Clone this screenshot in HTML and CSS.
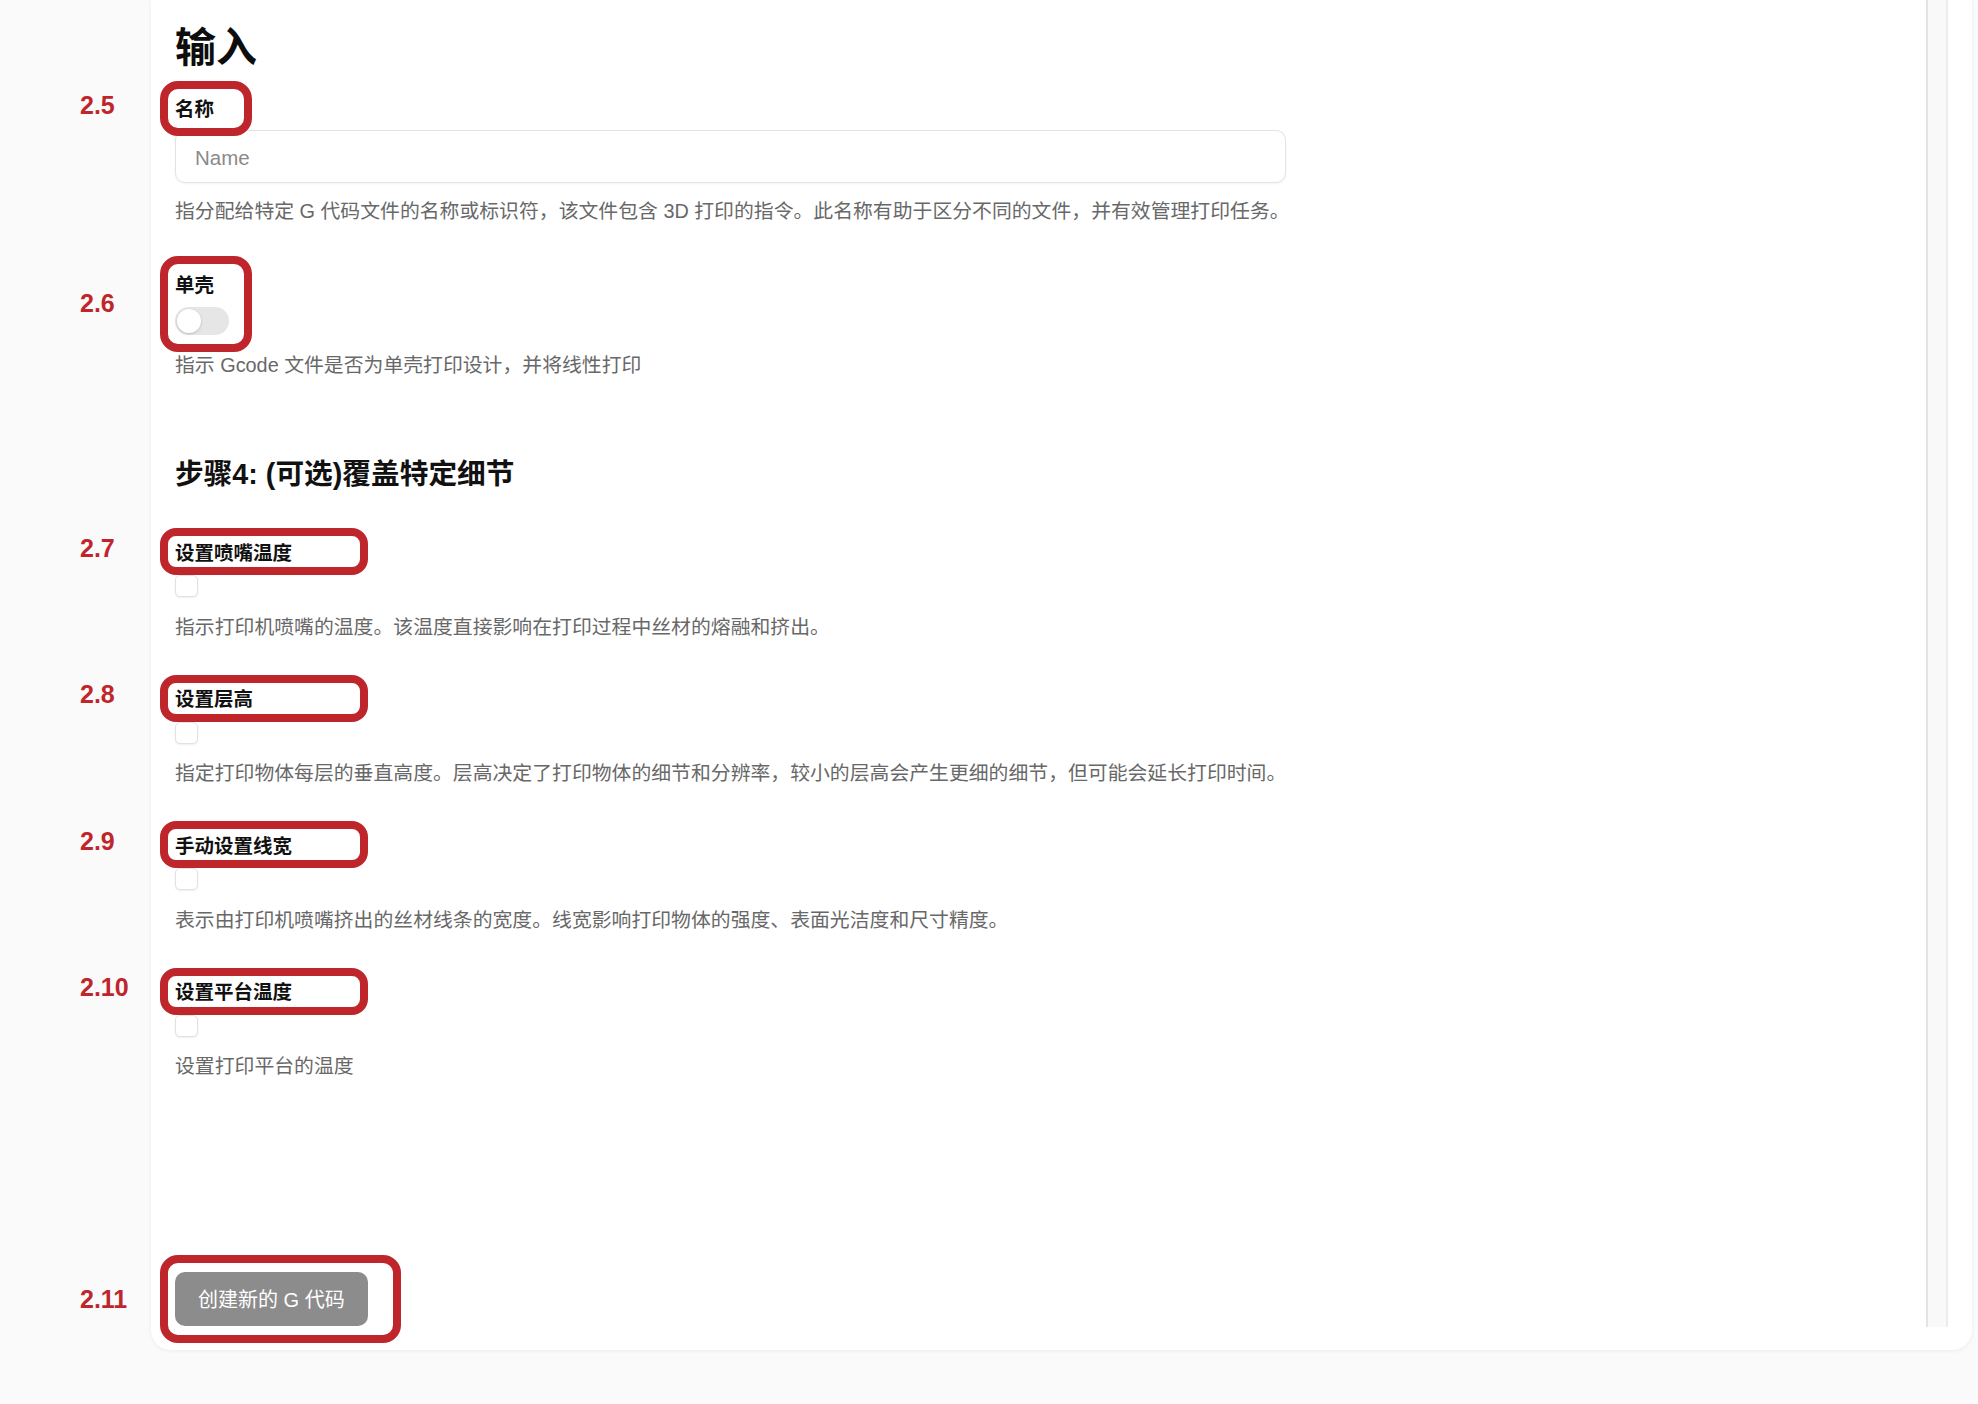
FILE: index.html
```html
<!DOCTYPE html>
<html lang="zh-CN">
<head>
<meta charset="utf-8">
<title>输入</title>
<link rel="stylesheet" href="styles.css">
</head>
<body>
<div class="card">
  <main class="content">
    <h1 class="title">输入</h1>

    <div class="field field-name">
      <span class="num">2.5</span>
      <span class="mark mark-name"></span>
      <label class="label">名称</label>
      <input class="text-input" type="text" placeholder="Name">
      <p class="desc desc-input">指分配给特定 G 代码文件的名称或标识符，该文件包含 3D 打印的指令。此名称有助于区分不同的文件，并有效管理打印任务。</p>
    </div>

    <div class="field field-shell">
      <span class="num num-shell">2.6</span>
      <span class="mark mark-shell"></span>
      <label class="label">单壳</label>
      <span class="toggle"><span class="knob"></span></span>
      <p class="desc desc-toggle">指示 Gcode 文件是否为单壳打印设计，并将线性打印</p>
    </div>

    <h2 class="step">步骤4: (可选)覆盖特定细节</h2>

    <div class="field field-check first">
      <span class="num num-check">2.7</span>
      <span class="mark mark-wide"></span>
      <label class="label">设置喷嘴温度</label>
      <input class="checkbox" type="checkbox">
      <p class="desc desc-check">指示打印机喷嘴的温度。该温度直接影响在打印过程中丝材的熔融和挤出。</p>
    </div>

    <div class="field field-check">
      <span class="num num-check">2.8</span>
      <span class="mark mark-wide"></span>
      <label class="label">设置层高</label>
      <input class="checkbox" type="checkbox">
      <p class="desc desc-check">指定打印物体每层的垂直高度。层高决定了打印物体的细节和分辨率，较小的层高会产生更细的细节，但可能会延长打印时间。</p>
    </div>

    <div class="field field-check">
      <span class="num num-check">2.9</span>
      <span class="mark mark-wide"></span>
      <label class="label">手动设置线宽</label>
      <input class="checkbox" type="checkbox">
      <p class="desc desc-check">表示由打印机喷嘴挤出的丝材线条的宽度。线宽影响打印物体的强度、表面光洁度和尺寸精度。</p>
    </div>

    <div class="field field-check">
      <span class="num num-check">2.10</span>
      <span class="mark mark-wide"></span>
      <label class="label">设置平台温度</label>
      <input class="checkbox" type="checkbox">
      <p class="desc desc-check">设置打印平台的温度</p>
    </div>

    <div class="field field-submit">
      <span class="num num-submit">2.11</span>
      <span class="mark mark-submit"></span>
      <button class="submit" type="button">创建新的 G 代码</button>
    </div>
  </main>
  <div class="track"></div>
</div>
</body>
</html>
```

FILE: styles.css
```css
* {
  box-sizing: border-box;
}

html, body {
  margin: 0;
  padding: 0;
}

body {
  background: #fafafa;
  font-family: "Liberation Sans", "Noto Sans CJK SC", sans-serif;
  color: #111;
  width: 1978px;
  height: 1404px;
  overflow: hidden;
}

.card {
  margin-left: 151px;
  width: 1821px;
  height: 1350px;
  background: #fff;
  border-radius: 0 0 20px 20px;
  box-shadow: 0 1px 4px rgba(0, 0, 0, 0.06);
  padding: 0 24px 23px 24px;
  display: flex;
}

.content {
  flex: 1;
  display: flex;
  flex-direction: column;
  align-items: flex-start;
  padding-top: 24px;
}

.track {
  width: 22px;
  background: #f9f9f9;
  border-left: 2px solid #e4e4e4;
  border-right: 2px solid #ececec;
}

.title {
  margin: 0;
  font-size: 41px;
  line-height: 48px;
  font-weight: 700;
  color: #0d0d0d;
}

.step {
  margin: 75px 0 0 0;
  font-size: 28.7px;
  line-height: 40px;
  font-weight: 700;
  color: #111;
}

.field {
  position: relative;
  display: flex;
  flex-direction: column;
  align-items: flex-start;
}

.field-name {
  margin-top: 22.5px;
}

.field-shell {
  margin-top: 46px;
}

.field-check {
  margin-top: 44.5px;
}

.field-submit {
  margin-top: 191.5px;
}

.label {
  font-size: 19.5px;
  line-height: 28px;
  font-weight: 700;
  color: #111;
}

.desc {
  margin: 0;
  font-size: 19.85px;
  line-height: 28px;
  color: #686868;
}

.desc-input {
  margin-top: 14px;
}

.desc-toggle {
  margin-top: 16px;
}

.desc-check {
  margin-top: 15.5px;
}

.text-input {
  margin-top: 7.5px;
  width: 1111px;
  height: 53px;
  border: 1px solid #e3e3e3;
  border-radius: 10px;
  padding: 2px 19px 0 19px;
  font-family: "Liberation Sans", "Noto Sans CJK SC", sans-serif;
  font-size: 20.5px;
  color: #333;
  background: #fff;
  box-shadow: 0 1px 2px rgba(0, 0, 0, 0.05);
  outline: none;
}

.text-input::placeholder {
  color: #8a8a8a;
}

.toggle {
  margin-top: 8px;
  width: 54px;
  height: 28px;
  border-radius: 14px;
  background: #e6e6e6;
  display: flex;
  align-items: center;
  padding-left: 2px;
}

.knob {
  width: 24px;
  height: 24px;
  border-radius: 50%;
  background: #fff;
  box-shadow: 0 1px 3px rgba(0, 0, 0, 0.18);
}

.checkbox {
  appearance: none;
  -webkit-appearance: none;
  margin: 8.5px 0 0 0;
  width: 23px;
  height: 22px;
  border: 1px solid #e2e2e2;
  border-radius: 5px;
  background: #fff;
  box-shadow: 0 1px 2px rgba(0, 0, 0, 0.07);
}

.submit {
  height: 54px;
  padding: 0 23px;
  border: none;
  border-radius: 10px;
  background: #8c8c8c;
  color: #fff;
  font-family: "Liberation Sans", "Noto Sans CJK SC", sans-serif;
  font-size: 20px;
}

/* annotation overlays */
.num {
  position: absolute;
  left: -95px;
  top: -4px;
  font-family: "Liberation Sans", Arial, sans-serif;
  font-size: 25px;
  line-height: 28px;
  font-weight: 700;
  color: #bf262c;
  white-space: nowrap;
}

.num-check {
  top: -5px;
}

.num-shell {
  top: 17.5px;
}

.num-submit {
  top: 13px;
}

.mark {
  position: absolute;
  left: -15px;
  border: 8px solid #bf262c;
  border-radius: 18px;
  pointer-events: none;
}

.mark-name {
  top: -13.5px;
  width: 92px;
  height: 55px;
}

.mark-shell {
  top: -15px;
  width: 92px;
  height: 96px;
}

.mark-wide {
  top: -10.5px;
  width: 208px;
  height: 47px;
  border-radius: 16px;
}

.mark-submit {
  top: -17px;
  width: 241px;
  height: 88px;
}
```
